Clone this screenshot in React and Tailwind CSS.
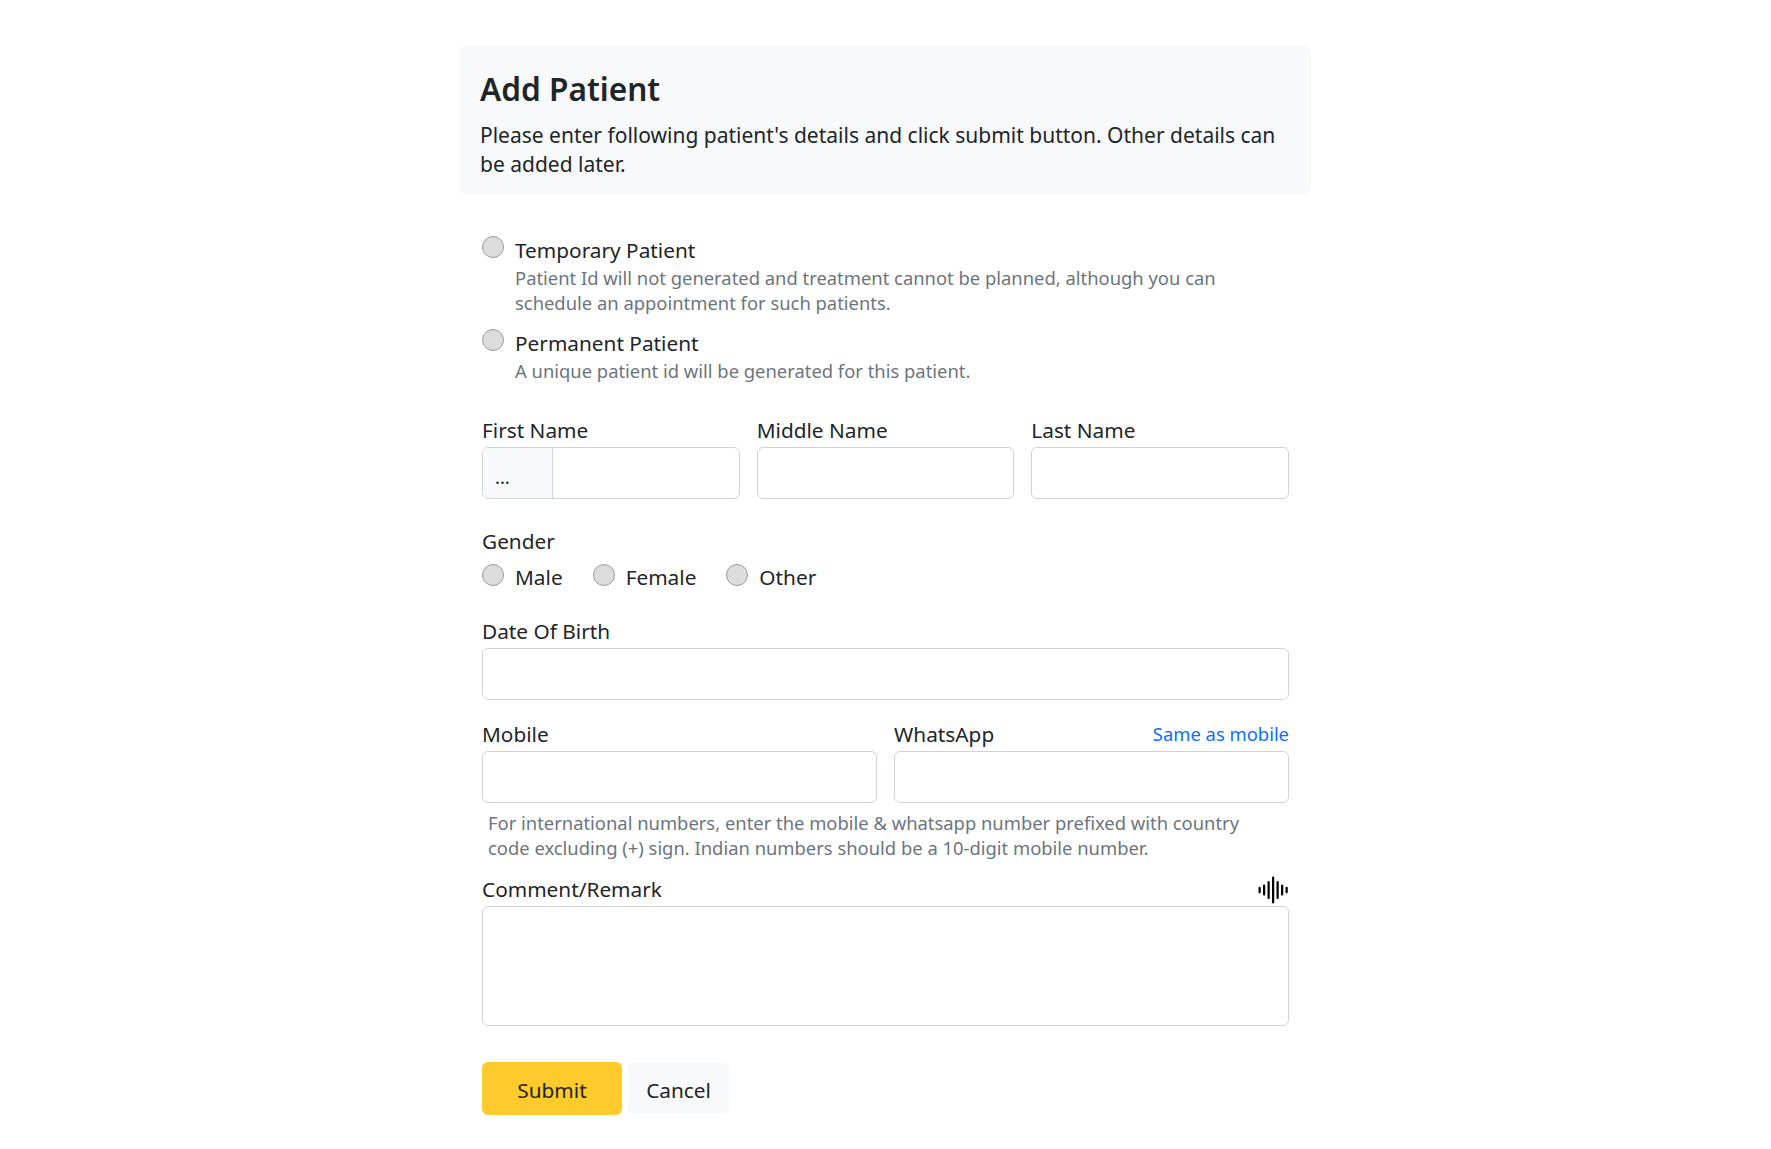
import React from "react";
import { BsSoundwave } from "react-icons/bs";

const inputClass =
  "block w-full h-[52px] bg-white border border-[#ced4da] rounded-[6px]";
const labelClass = "block text-[20.8px] leading-[31px] text-[#212529]";

const Radio = () => (
  <span className="block shrink-0 w-[22px] h-[22px] rounded-full bg-[#dcdcdc] border border-[#9c9c9c]"></span>
);

const AddPatient = () => {
  return (
    <div className="min-h-screen bg-white font-['Noto_Sans',sans-serif] text-[#212529]">
      <div className="w-[851px] ml-[460px] pt-[45px]">
        {/* Header */}
        <div className="h-[150px] bg-[#f8f9fa] rounded-[7px] px-[20px] pt-[23px]">
          <h2 className="text-[31.6px] leading-[42px] font-semibold">Add Patient</h2>
          <p className="mt-[11px] text-[21px] leading-[29px]">
            Please enter following patient's details and click submit button. Other details can be added later.
          </p>
        </div>

        <div className="px-[22px]">
          {/* Patient type */}
          <div className="mt-[41px] flex gap-[11px]">
            <Radio />
            <div>
              <div className="text-[20.8px] leading-[28px] mb-[1px]">Temporary Patient</div>
              <div className="text-[18.4px] leading-[25px] text-[#6c757d]">
                Patient Id will not generated and treatment cannot be planned, although you can schedule an appointment for such patients.
              </div>
            </div>
          </div>
          <div className="mt-[14px] flex gap-[11px]">
            <Radio />
            <div>
              <div className="text-[20.8px] leading-[28px] mb-[1px]">Permanent Patient</div>
              <div className="text-[18.4px] leading-[25px] text-[#6c757d]">
                A unique patient id will be generated for this patient.
              </div>
            </div>
          </div>

          {/* Name */}
          <div className="mt-[32px] grid grid-cols-3 gap-[17px]">
            <div>
              <label className={labelClass + " mb-[1px]"}>First Name</label>
              <div className="flex h-[52px] border border-[#ced4da] rounded-[6px] overflow-hidden">
                <div className="w-[70px] bg-[#f8f9fa] border-r border-[#ced4da] pl-[12px] pt-[16px] text-[18.4px] leading-[25px]">...</div>
                <input className="flex-1 min-w-0" />
              </div>
            </div>
            <div>
              <label className={labelClass + " mb-[1px]"}>Middle Name</label>
              <input className={inputClass} />
            </div>
            <div>
              <label className={labelClass + " mb-[1px]"}>Last Name</label>
              <input className={inputClass} />
            </div>
          </div>

          {/* Gender */}
          <div className="mt-[27px]">
            <label className={labelClass + " mb-[1px]"}>Gender</label>
            <div className="flex mt-[5px]">
              <div className="flex gap-[11px] mr-[30px]"><span className="mt-[2px]"><Radio /></span><span className={labelClass}>Male</span></div>
              <div className="flex gap-[11px] mr-[30px]"><span className="mt-[2px]"><Radio /></span><span className={labelClass}>Female</span></div>
              <div className="flex gap-[11px]"><span className="mt-[2px]"><Radio /></span><span className={labelClass}>Other</span></div>
            </div>
          </div>

          {/* Date of birth */}
          <div className="mt-[23px]">
            <label className={labelClass + " mb-[1px]"}>Date Of Birth</label>
            <input className={inputClass} />
          </div>

          {/* Phone */}
          <div className="mt-[19px] grid grid-cols-2 gap-[17px]">
            <div>
              <label className={labelClass + " mb-[1px]"}>Mobile</label>
              <input className={inputClass} />
            </div>
            <div>
              <div className="flex justify-between items-center mb-[1px]">
                <label className={labelClass}>WhatsApp</label>
                <a className="text-[18.4px] text-[#0d6efd] -mt-[2px]" href="#">Same as mobile</a>
              </div>
              <input className={inputClass} />
            </div>
          </div>
          <div className="mt-[7px] px-[6px] text-[18.4px] leading-[25px] text-[#6c757d]">
            For international numbers, enter the mobile &amp; whatsapp number prefixed with country code excluding (+) sign. Indian numbers should be a 10-digit mobile number.
          </div>

          {/* Comment */}
          <div className="mt-[14px]">
            <div className="flex justify-between items-center mb-[1px]">
              <label className={labelClass}>Comment/Remark</label>
              <BsSoundwave className="text-[36px] -my-[3px] -mr-[1px] text-black" />
            </div>
            <textarea className="block w-full h-[120px] bg-white border border-[#ced4da] rounded-[6px] resize-none"></textarea>
          </div>

          {/* Actions */}
          <div className="mt-[36px] flex gap-[6px]">
            <button className="w-[140px] h-[53px] pt-[4px] bg-[#ffca2c] rounded-[6px] text-[20.8px] text-[#212529]">Submit</button>
            <button className="w-[101px] h-[53px] pt-[4px] bg-[#f8f9fa] rounded-[6px] text-[20.8px] text-[#212529]">Cancel</button>
          </div>
        </div>
      </div>
    </div>
  );
};

export default function App() {
  return <AddPatient />;
}
